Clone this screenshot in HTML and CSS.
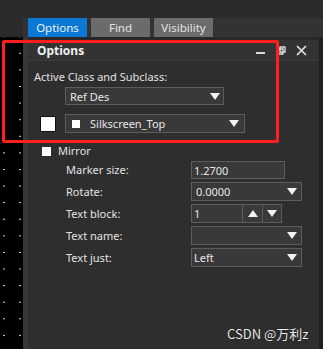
FILE: index.html
```html
<!DOCTYPE html>
<html lang="en">
<head>
    <meta charset="UTF-8">
    <title>Options</title>
    <link rel="stylesheet" href="styles.css">
</head>
<body>

    <div class="top-gap"></div>

    <!-- pestañas -->
    <div class="tab-bar">
        <div class="tab active">Options</div>
        <div class="tab">Find</div>
        <div class="tab">Visibility</div>
    </div>

    <div class="main">
        <div class="canvas"></div>
        <div class="gutter"></div>

        <div class="panel">
            <div class="panel-head">
                <span class="panel-title">Options</span>
                <span class="head-icons">
                    <span class="ico-min"></span>
                    <svg class="ico-pin" width="8" height="9" viewBox="0 0 8 9"><path d="M2 1h5v5H2z M0 3h5v5H0z" fill="none" stroke="#ddd" stroke-width="1.3"/></svg>
                    <svg class="ico-close" width="11" height="11" viewBox="0 0 11 11"><path d="M1 1L10 10M10 1L1 10" stroke="#e6e6e6" stroke-width="1.6"/></svg>
                </span>
            </div>

            <div class="panel-body">
                <div class="section-label">Active Class and Subclass:</div>

                <div class="class-row">
                    <div class="select select-class">
                        <span class="value">Ref Des</span>
                        <span class="arrow"></span>
                    </div>
                </div>

                <div class="sub-row">
                    <span class="swatch"></span>
                    <div class="select select-sub">
                        <span class="mini-swatch"></span>
                        <span class="value">Silkscreen_Top</span>
                        <span class="arrow"></span>
                    </div>
                </div>

                <div class="check-row">
                    <span class="check"></span>
                    <span>Mirror</span>
                </div>

                <div class="fields">
                    <div class="field-label">Marker size:</div>
                    <div class="input input-marker">1.2700</div>

                    <div class="field-label">Rotate:</div>
                    <div class="select select-wide">
                        <span class="value">0.0000</span>
                        <span class="arrow"></span>
                    </div>

                    <div class="field-label">Text block:</div>
                    <div class="spin">
                        <div class="input input-block">1</div>
                        <div class="spin-btn"><span class="arrow-up"></span></div>
                        <div class="spin-btn"><span class="arrow"></span></div>
                    </div>

                    <div class="field-label">Text name:</div>
                    <div class="select select-wide">
                        <span class="value"></span>
                        <span class="arrow"></span>
                    </div>

                    <div class="field-label">Text just:</div>
                    <div class="select select-wide">
                        <span class="value value-tight">Left</span>
                        <span class="arrow"></span>
                    </div>
                </div>

                <div class="watermark">CSDN @万利z</div>
            </div>
        </div>

        <div class="edge"></div>
    </div>

    <!-- marco rojo de anotación -->
    <div class="highlight"></div>

</body>
</html>
```

FILE: styles.css
```css
body {
    margin: 0;
    background-color: #2b2b2b;
    font-family: "Noto Sans", "Open Sans", sans-serif;
    font-size: 11px;
    color: #e2e2e2;
    width: 323px;
    height: 349px;
    overflow: hidden;
    position: relative;
}

.top-gap { height: 18px; }

.tab-bar {
    display: flex;
    gap: 4px;
    height: 19px;
    margin-left: 23px;
    padding-left: 5px;
    background-color: #333333;
}
.tab {
    width: 59px;
    line-height: 19px;
    text-align: center;
    background-color: #6b6b6b;
    color: #e4e4e4;
    font-size: 11.5px;
}
.tab.active { background-color: #0a78d4; color: #f0f0f0; }

.main {
    display: flex;
    height: 312px;
}
.canvas {
    width: 23px;
    background-color: #000;
    background-image: radial-gradient(circle, #d8d8d8 0.6px, transparent 0.9px);
    background-size: 16px 16.6px;
    background-position: -4px 8px;
}
.gutter { width: 5px; background-color: #383838; }
.edge { width: 4px; background-color: #1f1f1f; }

.panel {
    flex: 1;
    display: flex;
    flex-direction: column;
    background-color: #2e2e2e;
}
.panel-head {
    height: 20px;
    display: flex;
    align-items: center;
    justify-content: space-between;
    padding: 0 12px 0 9px;
    background-color: #333333;
    border-top: 3px solid #282828;
    border-bottom: 1px solid #3d3d3d;
}
.panel-title { font-weight: bold; font-size: 12px; color: #f0f0f0; }
.head-icons { display: flex; align-items: center; gap: 10px; }
.ico-min { width: 9px; height: 2px; background-color: #d8d8d8; margin-top: 6px; margin-right: 3px; }

.panel-body {
    flex: 1;
    position: relative;
    padding: 8px 0 0 6px;
}
.section-label { line-height: 16px; }

.select, .input {
    box-sizing: border-box;
    display: flex;
    align-items: center;
    background-color: #393939;
    border: 1px solid #5c5c5c;
    color: #e6e6e6;
}
.select .value { flex: 1; padding-left: 4px; }
.select .value-tight { padding-left: 2px; }
.arrow {
    width: 0;
    height: 0;
    border-left: 5px solid transparent;
    border-right: 5px solid transparent;
    border-top: 7px solid #f2f2f2;
    margin-right: 3px;
}
.arrow-up {
    width: 0;
    height: 0;
    border-left: 5px solid transparent;
    border-right: 5px solid transparent;
    border-bottom: 7px solid #f2f2f2;
}

.class-row { margin: 2px 0 0 31px; }
.select-class { width: 159px; height: 18px; }

.sub-row { display: flex; align-items: center; margin-top: 9px; margin-left: 6px; }
.swatch {
    width: 14px;
    height: 14px;
    background-color: #fff;
    border: 1px solid #111;
    margin-right: 9px;
}
.select-sub { width: 180px; height: 19px; }
.select-sub .arrow { margin-right: 5px; }
.mini-swatch { width: 8px; height: 8px; background-color: #fff; margin-left: 6px; }
.select-sub .value { padding-left: 10px; }

.check-row { display: flex; align-items: center; margin: 10px 0 0 8px; gap: 7px; line-height: 16px; }
.check { width: 9px; height: 9px; background-color: #fff; }

.fields {
    display: grid;
    grid-template-columns: 125px auto;
    row-gap: 3px;
    align-items: center;
    margin: 2px 0 0 32px;
}
.field-label { line-height: 18px; }
.input-marker { width: 94px; height: 18px; padding-left: 2px; }
.select-wide { width: 111px; height: 19px; }
.select-wide .arrow { margin-right: 4px; }

.spin { display: flex; height: 19px; }
.input-block { width: 52px; height: 19px; padding-left: 2px; }
.spin-btn {
    box-sizing: border-box;
    width: 20px;
    height: 19px;
    display: flex;
    align-items: center;
    justify-content: center;
    background-color: #393939;
    border: 1px solid #5c5c5c;
    border-left: none;
}
.spin-btn:last-child { width: 19px; }
.spin-btn .arrow { margin: 0; }

.watermark {
    position: absolute;
    left: 199px;
    top: 263px;
    font-family: "Noto Sans CJK SC", sans-serif;
    font-size: 13px;
    color: #ececec;
    text-shadow: 0 0 1px #000;
}

.highlight {
    position: absolute;
    left: 2px;
    top: 40px;
    width: 271px;
    height: 97px;
    border: 3px solid #ff1f1f;
    border-radius: 2px;
}
```
